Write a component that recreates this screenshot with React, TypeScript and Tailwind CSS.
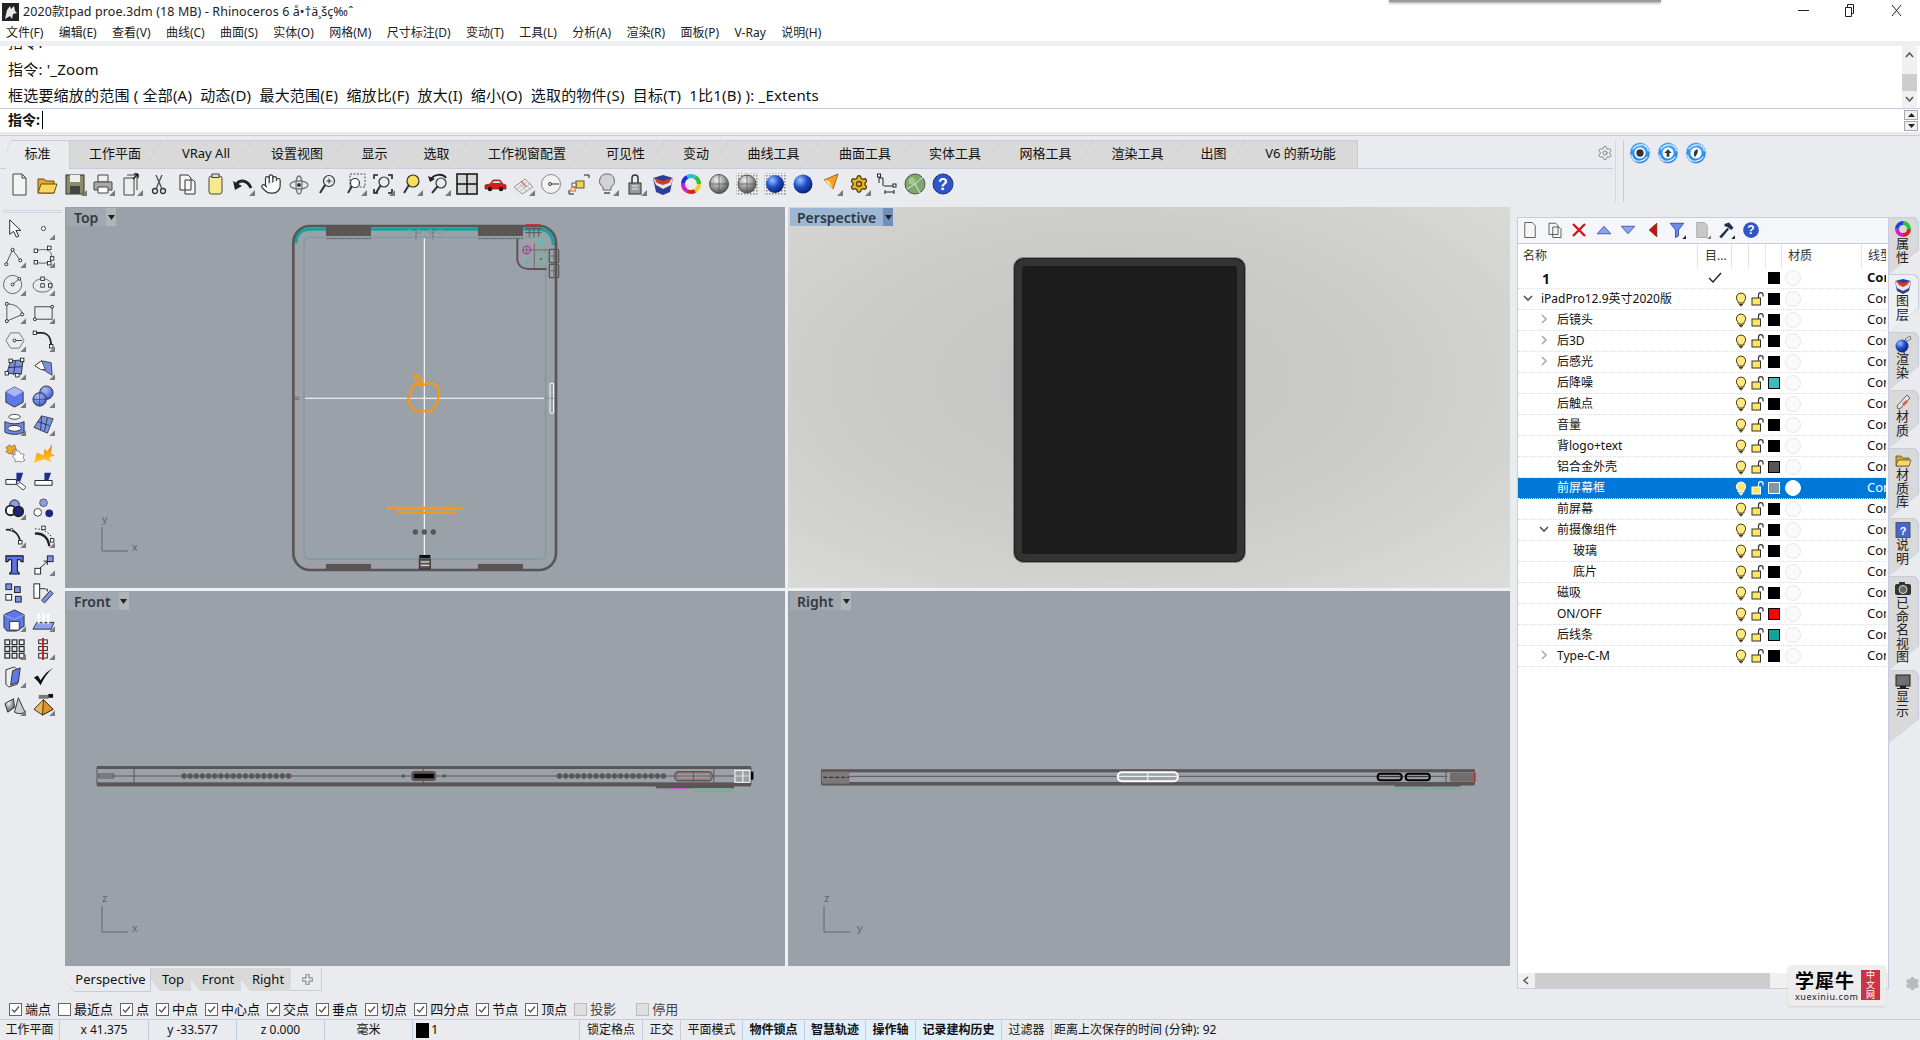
import React from 'react';
import { Hand, Settings } from 'lucide-react';

const DK = '#5c5556';
const TEAL = '#7f9a9b';

const menus = ['文件(F)', '编辑(E)', '查看(V)', '曲线(C)', '曲面(S)', '实体(O)', '网格(M)', '尺寸标注(D)', '变动(T)', '工具(L)', '分析(A)', '渲染(R)', '面板(P)', 'V-Ray', '说明(H)'];

const tabs = [
  { label: '工作平面', w: 'w-[110px]' },
  { label: 'VRay All', w: 'w-[108px]' },
  { label: '设置视图', w: 'w-[110px]' },
  { label: '显示', w: 'w-[81px]' },
  { label: '选取', w: 'w-[79px]' },
  { label: '工作视窗配置', w: 'w-[138px]' },
  { label: '可见性', w: 'w-[95px]' },
  { label: '变动', w: 'w-[82px]' },
  { label: '曲线工具', w: 'w-[109px]' },
  { label: '曲面工具', w: 'w-[110px]' },
  { label: '实体工具', w: 'w-[106px]' },
  { label: '网格工具', w: 'w-[111px]' },
  { label: '渲染工具', w: 'w-[109px]' },
  { label: '出图', w: 'w-[79px]' },
  { label: 'V6 的新功能', w: 'w-[131px]' },
];

const layers = [
  { name: 'iPadPro12.9英寸2020版', level: 0, chev: 'down', color: '#000' },
  { name: '后镜头', level: 1, chev: 'right', color: '#000' },
  { name: '后3D', level: 1, chev: 'right', color: '#000' },
  { name: '后感光', level: 1, chev: 'right', color: '#000' },
  { name: '后降噪', level: 1, color: '#3cbcbc' },
  { name: '后触点', level: 1, color: '#000' },
  { name: '音量', level: 1, color: '#000' },
  { name: '背logo+text', level: 1, color: '#000' },
  { name: '铝合金外壳', level: 1, color: '#5c5556' },
  { name: '前屏幕框', level: 1, color: '#7f9a9b', selected: true },
  { name: '前屏幕', level: 1, color: '#000' },
  { name: '前摄像组件', level: 1, chev: 'down', color: '#000' },
  { name: '玻璃', level: 2, color: '#000' },
  { name: '底片', level: 2, color: '#000' },
  { name: '磁吸', level: 1, color: '#000' },
  { name: 'ON/OFF', level: 1, color: '#ff0000' },
  { name: '后线条', level: 1, color: '#12a39f' },
  { name: 'Type-C-M', level: 1, chev: 'right', color: '#000' },
];

const snaps = [
  { t: '端点', on: true },
  { t: '最近点', on: false },
  { t: '点', on: true },
  { t: '中点', on: true },
  { t: '中心点', on: true },
  { t: '交点', on: true },
  { t: '垂点', on: true },
  { t: '切点', on: true },
  { t: '四分点', on: true },
  { t: '节点', on: true },
  { t: '顶点', on: true },
];

const status = [
  { t: '工作平面', w: 'w-[60px]' },
  { t: 'x 41.375', w: 'w-[89px]' },
  { t: 'y -33.577', w: 'w-[88px]' },
  { t: 'z 0.000', w: 'w-[88px]' },
  { t: '毫米', w: 'w-[88px]' },
];

const status2 = [
  { t: '锁定格点', w: 'w-[63px]' },
  { t: '正交', w: 'w-[38px]' },
  { t: '平面模式', w: 'w-[62px]' },
  { t: '物件锁点', w: 'w-[62px]', on: true },
  { t: '智慧轨迹', w: 'w-[61px]', on: true },
  { t: '操作轴', w: 'w-[50px]', on: true },
  { t: '记录建构历史', w: 'w-[86px]', on: true },
  { t: '过滤器', w: 'w-[50px]' },
];

const Fly = () => <path d="M24 24h-6l6-6z" fill="#7b7b7b" />;
const ln = { fill: 'none', stroke: '#333', strokeWidth: 1.3 };
const Mag = ({ x = 14, y = 9, r = 5.5, f = 'none' }: { x?: number; y?: number; r?: number; f?: string }) => (
  <>
    <circle cx={x} cy={y} r={r} fill={f} stroke="#333" strokeWidth={1.2} />
    <path d={`M${x - r * 0.7} ${y + r * 0.7}L5 21`} stroke="#333" strokeWidth={2} />
  </>
);

const topIcons: React.ReactNode[] = [
  <path d="M6 2h9l4 4v17H6zM15 2v4h4" fill="#f4f4f4" stroke="#444" />,
  <><path d="M3 21V7h6l2 2h8v12z" fill="#e3a92a" stroke="#6b4d0c" /><path d="M3 21l3-9h16l-3 9z" fill="#f9d65c" stroke="#6b4d0c" /></>,
  <><rect x="3" y="3" width="18" height="19" fill="#8d8d6d" stroke="#333" /><rect x="7" y="3" width="10" height="7" fill="#eee" /><rect x="7" y="14" width="10" height="8" fill="#444" /><Fly /></>,
  <><path d="M7 3h10v7H7z" fill="#eee" stroke="#444" /><path d="M3 10h18v8H3z" fill="#a9a9a9" stroke="#444" /><path d="M7 15h10v6H7z" fill="#fff" stroke="#444" /><Fly /></>,
  <><path d="M5 6h10v17H5z" fill="#eee" stroke="#444" /><path d="M8 3h10v15" fill="none" stroke="#444" /><path d="M14 7l5-5M19 2v4M19 2h-4" stroke="#222" strokeWidth={1.5} /><Fly /></>,
  <><circle cx="8" cy="19" r="2.5" fill="none" stroke="#333" strokeWidth={1.3} /><circle cx="16" cy="19" r="2.5" fill="none" stroke="#333" strokeWidth={1.3} /><path d="M9 17L15 3M15 17L9 3" stroke="#555" strokeWidth={1.4} /></>,
  <path d="M5 3h8l3 3v12H5zM10 8h8l2 2v12H10z" fill="#f7f7f7" stroke="#333" />,
  <><rect x="6" y="4" width="13" height="18" rx="2.5" fill="#f8e98a" stroke="#444" /><rect x="9" y="2" width="7" height="3.5" fill="#ddd" stroke="#444" /></>,
  <><path d="M5 14c2-7 11-7 15 2" fill="none" stroke="#222" strokeWidth={3} /><path d="M2 9l2 9 7-4z" fill="#222" /><Fly /></>,
  <Hand x={1} y={1} width={22} height={22} fill="#fff" stroke="#333" strokeWidth={1.3} />,
  <><ellipse cx="12" cy="13" rx="9" ry="4" {...ln} stroke="#777" /><ellipse cx="12" cy="13" rx="3" ry="9" {...ln} stroke="#777" /><circle cx="12" cy="13" r="2" fill="#333" /></>,
  <><Mag /><path d="M11.5 9h5M14 6.5v5" stroke="#333" /></>,
  <><rect x="7" y="2" width="15" height="13" fill="none" stroke="#444" strokeDasharray="2 1.5" /><Mag x={12} y={11} r={4.5} f="#fff" /><Fly /></>,
  <><path d="M3 7V3h4M17 3h4v4M3 17v4h4M21 17v4h-4" fill="none" stroke="#222" strokeWidth={1.6} /><Mag x={13} y={10} r={5} /><Fly /></>,
  <><Mag x={14} y={9} r={6} f="#f4e05a" /><Fly /></>,
  <><Mag x={14} y={11} r={5} /><path d="M4 8c2-6 12-7 15-2" fill="none" stroke="#222" strokeWidth={2} /><path d="M1 4l2 6 5-3z" fill="#222" /><Fly /></>,
  <><rect x="2" y="2" width="20" height="20" fill="#d7d7d7" stroke="#111" strokeWidth={1.5} /><path d="M12 2v20M2 12h20" stroke="#111" strokeWidth={1.5} /></>,
  <><path d="M2 17v-4l5-1 3-4h7l3 4 3 1v4z" fill="#d81f1f" stroke="#8c1010" strokeWidth={0.7} /><path d="M9 11l2-2h5l2 2z" fill="#bde" /><circle cx="7" cy="17" r="2.2" fill="#111" /><circle cx="18" cy="17" r="2.2" fill="#111" /></>,
  <><path d="M3 15l11-8 8 8-11 7z" fill="#e9e9e9" stroke="#999" /><path d="M8 11l8 8M11 9l8 8M6 17l11-8M9 19l11-8" stroke="#aaa" strokeWidth={0.7} /><path d="M10 9l5 6" stroke="#d33" /><Fly /></>,
  <><circle cx="12" cy="12" r="9.5" fill="#f2f2f2" stroke="#888" /><circle cx="11" cy="12" r="1.5" fill="#fff" stroke="#333" /><path d="M12.5 12H20" stroke="#333" /></>,
  <><rect x="9" y="9" width="8" height="7" fill="#f6d33c" stroke="#555" /><path d="M5 11h4v4H5z" fill="#fff" stroke="#555" /><path d="M17 3h5v3M2 22h5M2 18v4" fill="none" stroke="#222" /><path d="M3 19l3-5 3 5z" fill="none" stroke="#d07020" /></>,
  <><path d="M12 2a7 7 0 0 0-4 13v3h8v-3a7 7 0 0 0-4-13z" fill="#d3d3d3" stroke="#666" /><path d="M9 20h6v2H9z" fill="#777" /><Fly /></>,
  <><rect x="6" y="11" width="12" height="11" fill="#999" stroke="#333" /><path d="M9 11V6a3 3 0 0 1 6 0v5" fill="none" stroke="#333" strokeWidth={1.5} /><path d="M9 14h6M9 17h6" stroke="#eee" /><Fly /></>,
  <><path d="M2 6l10-3 10 3-3 14-7 3-7-3z" fill="#2d3e9a" /><path d="M2 6l10 5 10-5-2 7-8 4-7-4z" fill="#e8e8e8" /><path d="M3 6l9 3 9-3-3 5-6 2-6-2z" fill="#d93a1c" /></>,
  <><circle cx="12" cy="12" r="8" fill="none" stroke="#e8d020" strokeWidth={4} strokeDasharray="8.4 42" strokeDashoffset="0" /><circle cx="12" cy="12" r="8" fill="none" stroke="#e02020" strokeWidth={4} strokeDasharray="8.4 42" strokeDashoffset="-8.4" /><circle cx="12" cy="12" r="8" fill="none" stroke="#d020c0" strokeWidth={4} strokeDasharray="8.4 42" strokeDashoffset="-16.8" /><circle cx="12" cy="12" r="8" fill="none" stroke="#2030d0" strokeWidth={4} strokeDasharray="8.4 42" strokeDashoffset="-25.2" /><circle cx="12" cy="12" r="8" fill="none" stroke="#20c0d0" strokeWidth={4} strokeDasharray="8.4 42" strokeDashoffset="-33.6" /><circle cx="12" cy="12" r="8" fill="none" stroke="#30c030" strokeWidth={4} strokeDasharray="8.4 42" strokeDashoffset="-42" /></>,
  <><circle cx="12" cy="12" r="9.5" fill="url(#rkGray)" stroke="#555" /><path d="M12 2.5v19M2.5 12h19" stroke="#555" strokeWidth={0.7} /></>,
  <><rect x="1" y="1" width="22" height="22" fill="url(#rkDots)" /><circle cx="12" cy="12" r="9" fill="url(#rkGray)" stroke="#555" /><path d="M12 3v18M3 12h18" stroke="#555" strokeWidth={0.7} /></>,
  <><rect x="1" y="1" width="22" height="22" fill="url(#rkDots)" /><circle cx="12" cy="12" r="9" fill="url(#rkBlue)" /></>,
  <circle cx="12" cy="12" r="9.5" fill="url(#rkBlue)" />,
  <><path d="M5 8l14-6-5 15z" fill="#f2a22a" stroke="#a66812" /><path d="M5 8l5 1 4 8z" fill="#ffe9a8" /><Fly /></>,
  <><Settings x={2} y={2} width={20} height={20} fill="#e6b52e" stroke="#5a4510" strokeWidth={1.7} /><Fly /></>,
  <><path d="M4 3v8M4 6h4v8M9 14h11" fill="none" stroke="#222" /><rect x="2.5" y="2" width="3" height="3" fill="#fff" stroke="#222" /><rect x="18" y="12" width="3" height="3" fill="#fff" stroke="#222" /><path d="M10 20h9M10 18v4M19 18v4" stroke="#222" /></>,
  <><circle cx="12" cy="12" r="10" fill="#7ea86c" stroke="#555" /><path d="M12 12L20 5M12 12L4 17M12 12l5 9" stroke="#eef" strokeWidth={0.9} /><circle cx="9" cy="9" r="3.5" fill="#a5c78c" /></>,
  <><circle cx="12" cy="12" r="10" fill="#2f55c8" stroke="#1b2f80" /><text x="12" y="17.5" fontSize="16" fontWeight="700" textAnchor="middle" fill="#fff" fontFamily="Liberation Sans">?</text></>,
];

const Node = ({ x, y, f = '#fff' }: { x: number; y: number; f?: string }) => <rect x={x - 1.8} y={y - 1.8} width="3.6" height="3.6" fill={f} stroke="#222" strokeWidth={0.9} />;

const leftIcons: React.ReactNode[] = [
  <path d="M7 3v15l4-3 3 6 2.5-1-3-6h5z" fill="#fff" stroke="#222" />,
  <><circle cx="12" cy="12" r="2.2" fill="#fff" stroke="#444" /><Fly /></>,
  <><path d="M3 20L10 5l8 11" fill="none" stroke="#555" /><circle cx="3.5" cy="20" r="1.6" fill="#fff" stroke="#222" /><circle cx="10" cy="5" r="1.6" fill="#fff" stroke="#222" /><circle cx="18" cy="16" r="1.6" fill="#fff" stroke="#222" /><Fly /></>,
  <><path d="M4 6c14-4 18 2 16 9-1 4-8 5-16 3" fill="none" stroke="#555" /><Node x={4} y={6} /><Node x={18} y={3} /><Node x={21} y={14} /><Node x={18} y={19} /><Node x={4} y={18} /><Fly /></>,
  <><circle cx="10" cy="12" r="9.5" fill="none" stroke="#666" /><path d="M10 12l7-6" stroke="#555" /><circle cx="10" cy="12" r="1.5" fill="#fff" stroke="#222" /><circle cx="17" cy="6" r="1.5" fill="#fff" stroke="#222" /><Fly /></>,
  <><ellipse cx="11" cy="13" rx="10" ry="7" fill="none" stroke="#666" /><Node x={11} y={6} /><Node x={11} y={13} /><Node x={19} y={13} /><Fly /></>,
  <><path d="M4 3v18M4 3c8 0 15 4 16 11L4 21" fill="none" stroke="#555" /><circle cx="4" cy="3" r="1.6" fill="#fff" stroke="#222" /><circle cx="20" cy="14" r="1.6" fill="#fff" stroke="#222" /><circle cx="4" cy="21" r="1.6" fill="#fff" stroke="#222" /><Fly /></>,
  <><rect x="3" y="6" width="18" height="13" fill="none" stroke="#444" /><circle cx="3" cy="19" r="1.5" fill="#fff" stroke="#222" /><circle cx="21" cy="6" r="1.5" fill="#fff" stroke="#222" /><Fly /></>,
  <><path d="M3 12l5-8h9l5 8-5 8H8z" fill="none" stroke="#777" /><path d="M12 12h8" stroke="#444" /><circle cx="12" cy="12" r="1.5" fill="#fff" stroke="#222" /><Fly /></>,
  <><path d="M4 4h6c6 0 10 5 10 14" fill="none" stroke="#222" strokeWidth={2} /><Node x={3} y={4} /><Node x={20} y={18} /><Fly /></>,
  <><path d="M4 17l4-13 13-1-2 15z" fill="#7790e8" stroke="#333" /><path d="M6 11l14-1M13 4l-2 15" stroke="#333" /><Node x={8} y={4} /><Node x={20} y={3} /><Node x={4} y={17} /><Node x={15} y={19} /><Fly /></>,
  <><path d="M3 9l7-5 10 2 1 13-8-5-3-1z" fill="#7a92e6" stroke="#444" /><path d="M3 9l7-5 4 9-5 0z" fill="#fff" stroke="#444" /><Fly /></>,
  <><path d="M12 2l9 5v11l-9 5-9-5V7z" fill="#5f78e8" stroke="#333" /><path d="M3 7l9 5 9-5-9-5z" fill="#a9b8f2" /><Fly /></>,
  <><circle cx="15" cy="8" r="7" fill="url(#rkBlueS)" stroke="#333" /><circle cx="8" cy="15" r="7" fill="url(#rkBlueS)" stroke="#333" /><path d="M8 8v14M1 15h14" stroke="#334" strokeWidth={0.6} /><Fly /></>,
  <><ellipse cx="12" cy="4" rx="6" ry="2.5" fill="#fff" stroke="#444" /><path d="M2 9c6 3 14 3 20 0v11c-6 3-14 3-20 0z" fill="#6d86ea" stroke="#333" /><ellipse cx="12" cy="16" rx="7" ry="3" fill="#fff" stroke="#333" /><Fly /></>,
  <><path d="M2 15L10 3l12 3-6 15z" fill="#7b92e6" stroke="#444" /><path d="M6 9l12 4M10 3l-1 15M16 5l-3 14" stroke="#223" strokeWidth={0.8} /><Fly /></>,
  <><path d="M3 7l4-3 2 2 3-2 2 5-4 1 1 4-5-1-3-2 2-2z" fill="#f2a81c" stroke="#444" strokeWidth={0.6} /><path d="M12 11l4-1 2 3 4 1-1 4 2 2-4 2-3-1-3 1-1-4-2-2 3-2z" fill="#fff" stroke="#444" strokeWidth={0.6} /></>,
  <path d="M2 23l3-11 7 3 1-7 3 3 5-8-1 10 4 2-6 2 2 5-8-3z" fill="url(#rkOrange)" />,
  <><path d="M3 11h11v5H3z" fill="#fff" stroke="#222" /><path d="M14 4h7l-3 9h-4z" fill="#1f2f90" /><path d="M14 16l7 6 3-3-6-5z" fill="#fff" stroke="#444" /></>,
  <><path d="M3 12h18v5H3z" fill="#fff" stroke="#222" /><path d="M13 4h7l-3 8h-4z" fill="#1f2f90" /></>,
  <><circle cx="12" cy="8" r="5" fill="#8a9cec" stroke="#222" /><circle cx="8" cy="14" r="5" fill="#fff" stroke="#222" strokeWidth={2} /><circle cx="16" cy="15" r="5" fill="#1f2480" stroke="#222" strokeWidth={2} /><Fly /></>,
  <><circle cx="12" cy="6" r="4" fill="#8a9cec" stroke="#555" /><circle cx="6" cy="16" r="4" fill="#fff" stroke="#444" /><circle cx="18" cy="17" r="4" fill="#1f2480" /></>,
  <><path d="M3 5c9-1 14 5 15 13" fill="none" stroke="#222" strokeWidth={1.8} /><circle cx="9" cy="5" r="1.4" fill="#fff" stroke="#222" /><Node x={18} y={18} /><Fly /></>,
  <><path d="M3 9c9-1 14 5 15 13" fill="none" stroke="#222" strokeWidth={2.4} /><path d="M3 4c11 0 18 6 19 14" fill="none" stroke="#222" strokeDasharray="1.5 2" /><Node x={12} y={3} /><Node x={21} y={16} /><Fly /></>,
  <><path d="M3 3h18v6h-2l-1-2h-3v12l2 2v1H7v-1l2-2V7H6L5 9H3z" fill="#5a75e8" stroke="#111" strokeWidth={1.1} /></>,
  <><rect x="3" y="16" width="6" height="6" fill="#fff" stroke="#222" /><rect x="16" y="3" width="6" height="6" fill="#7b92e6" stroke="#222" /><path d="M8 16l8-7M12 8.5h4v4" fill="none" stroke="#222" /><Fly /></>,
  <><rect x="3" y="3" width="6" height="6" fill="#7b92e6" stroke="#222" /><rect x="12" y="6" width="6" height="6" fill="#7b92e6" stroke="#222" /><rect x="3" y="14" width="6" height="6" fill="#fff" stroke="#222" /><rect x="13" y="16" width="6" height="6" fill="#7b92e6" stroke="#222" /></>,
  <><rect x="2" y="3" width="6" height="15" fill="#fff" stroke="#222" /><path d="M8 8h6l2 2M16 8v3" fill="none" stroke="#333" /><path d="M10 20l9-10 3 3-9 10z" fill="#7b92e6" stroke="#333" /></>,
  <><path d="M12 1l10 5v12l-8 5H4l-3-4V6z" fill="#5f78e8" stroke="#333" /><path d="M7 13h10v9H7z" fill="#fff" stroke="#333" /><path d="M1 6l11 5 10-5" fill="none" stroke="#9fb0f0" /><Fly /></>,
  <><path d="M1 21l4-7h18l-3 7z" fill="#8ea2ee" stroke="#333" /><path d="M7 15V5M12 15V5M17 15V5" stroke="#fff" strokeWidth={2} /><path d="M5 8l2-4 2 4M10 8l2-4 2 4M15 8l2-4 2 4" fill="#fff" /><Fly /></>,
  <><g fill="none" stroke="#222" strokeWidth={1.2}><rect x="2" y="3" width="5" height="5" /><rect x="9.5" y="3" width="5" height="5" /><rect x="17" y="3" width="5" height="5" /><rect x="2" y="10" width="5" height="5" /><rect x="9.5" y="10" width="5" height="5" /><rect x="17" y="10" width="5" height="5" /><rect x="2" y="17" width="5" height="5" /><rect x="9.5" y="17" width="5" height="5" /><rect x="17" y="17" width="5" height="5" /></g><Fly /></>,
  <><g fill="none" stroke="#222"><rect x="7" y="3" width="9" height="4" /><rect x="7" y="10" width="9" height="4" /><rect x="7" y="17" width="9" height="5" /></g><path d="M11.5 1v23" stroke="#c81e1e" strokeWidth={2} /><Fly /></>,
  <><path d="M3 5l9-3 3 3v15l-9 3-3-3z" fill="#ededed" stroke="#333" /><path d="M10 6l8-3-2 15-8 3z" fill="#5f78e8" stroke="#333" /><Fly /></>,
  <path d="M2 13l4 4 3 4C12 14 16 8 22 3c-7 4-10 8-13 13l-3-5z" fill="#111" />,
  <><path d="M2 11l9-5 1 9-7 5z" fill="url(#rkGray)" stroke="#333" /><path d="M16 5l7 15c-3 2-8 2-11 0z" fill="#ccc" stroke="#333" /><Fly /></>,
  <><path d="M12 7L2 17l9 6 11-6z" fill="#f0b44a" stroke="#333" /><path d="M12 7l-1 16 11-6z" fill="#e09628" stroke="#333" /><path d="M7 2h10v4H7z" fill="#777" /><path d="M17 1h5v4h-5z" fill="#111" /><Fly /></>,
];

const panelIcons: React.ReactNode[] = [
  <path d="M5 2h10l4 4v16H5z" fill="#f6f6f6" stroke="#333" />,
  <path d="M4 3h9l3 3v12H4zM9 8h8l3 3v11H9z" fill="#f6f6f6" stroke="#333" />,
  <path d="M4 4l16 16M20 4L4 20" stroke="#d01616" strokeWidth={3.2} />,
  <path d="M3 17L12 7l9 10z" fill="#8ea2ee" stroke="#2438a0" />,
  <path d="M3 7l9 10 9-10z" fill="#8ea2ee" stroke="#2438a0" />,
  <path d="M17 3v18L7 12z" fill="#c31414" stroke="#7a0a0a" />,
  <><path d="M3 3h18l-7 9v8l-4 2V12z" fill="#6d8be8" stroke="#1f3590" /><path d="M24 24h-5l5-5z" fill="#222" /></>,
  <><path d="M5 2h10l4 4v16H5z" fill="#c9c9c9" stroke="#999" /><path d="M24 24h-5l5-5z" fill="#777" /></>,
  <><path d="M3 21L14 9l2 2L6 23z" fill="#24304a" /><path d="M10 4l6-2 6 7-3 3-5-4-4-1z" fill="#24304a" /><path d="M24 24h-5l5-5z" fill="#222" /></>,
  <><circle cx="12" cy="12" r="10.5" fill="#2f55c8" /><text x="12" y="17.5" fontSize="16" fontWeight="700" textAnchor="middle" fill="#fff" fontFamily="Liberation Sans">?</text></>,
];

const sideTabs = [
  { h: 'h-[57px]', label: '属性', icon: <><circle cx="9" cy="9" r="6" fill="none" stroke="#e02020" strokeWidth={4} strokeDasharray="9.4 28" /><circle cx="9" cy="9" r="6" fill="none" stroke="#d020c0" strokeWidth={4} strokeDasharray="9.4 28" strokeDashoffset="-9.4" /><circle cx="9" cy="9" r="6" fill="none" stroke="#2040e0" strokeWidth={4} strokeDasharray="9.4 28" strokeDashoffset="-18.8" /><circle cx="9" cy="9" r="6" fill="none" stroke="#30c040" strokeWidth={4} strokeDasharray="9.4 28" strokeDashoffset="-28.2" /></> },
  { h: 'h-[58px]', label: '图层', active: true, icon: <><path d="M1 4l8-2 8 2-2 10-6 3-6-3z" fill="#2d3e9a" /><path d="M1 4l8 3 8-3-2 7-6 3-6-3z" fill="#e8e8e8" /><path d="M2 4l7 2 7-2-3 4-4 2-4-2z" fill="#d93a1c" /></> },
  { h: 'h-[58px]', label: '渲染', icon: <><circle cx="8" cy="11" r="6.5" fill="url(#rkBlue)" /><path d="M11 4l5-3 1 3-4 2z" fill="#ddd" stroke="#444" strokeWidth={0.6} /></> },
  { h: 'h-[58px]', label: '材质', icon: <><path d="M4 16l-1-3L13 2l3 3L7 15z" fill="#e3e3e3" stroke="#444" strokeWidth={0.8} /><path d="M8 11l4-4 2 2-4 4z" fill="#d9663c" /></> },
  { h: 'h-[70px]', label: '材质库', icon: <><path d="M2 15V5h5l2 2h6v8z" fill="#d9a52a" stroke="#444" strokeWidth={0.7} /><path d="M2 15l2-6h13l-2 6z" fill="#f8d86a" stroke="#444" strokeWidth={0.7} /></> },
  { h: 'h-[58px]', label: '说明', icon: <><rect x="2" y="1.5" width="14" height="15" fill="#4767d0" stroke="#555" /><text x="9" y="14" fontSize="11" fontWeight="700" textAnchor="middle" fill="#fff" fontFamily="Liberation Sans">?</text></> },
  { h: 'h-[94px]', label: '已命名视图', icon: <><rect x="1" y="5" width="16" height="11" rx="2" fill="#333" /><rect x="5" y="3" width="6" height="3" fill="#333" /><circle cx="9" cy="10.5" r="4" fill="#666" stroke="#ddd" /></> },
  { h: 'h-[73px]', label: '显示', icon: <><rect x="2" y="2" width="14" height="11" fill="#6f6f6f" stroke="#222" /><path d="M6 13h6v2h3v1H3v-1h3z" fill="#222" /></> },
];

const Bulb = ({ white }: { white?: boolean }) => (
  <svg width="12" height="15" viewBox="0 0 12 15">
    <path d="M6 1a4.7 4.7 0 0 0-3 8.3V11h6V9.3A4.7 4.7 0 0 0 6 1z" fill="#ffe97e" stroke={white ? '#fff' : '#4a3a10'} />
    <path d="M4 12.5h4" stroke={white ? '#fff' : '#4a3a10'} strokeWidth={1.5} />
    <path d="M5 13.8h2" stroke={white ? '#fff' : '#4a3a10'} />
  </svg>
);

const Lock = ({ white }: { white?: boolean }) => (
  <svg width="14" height="14" viewBox="0 0 14 14">
    <rect x="1" y="6" width="8.5" height="7" fill="#ffe560" stroke={white ? '#fff' : '#333'} />
    <path d="M7.5 6V3a2.3 2.3 0 0 1 4.6 0v1.5" fill="none" stroke={white ? '#fff' : '#333'} strokeWidth={1.2} />
  </svg>
);

const Chev = ({ dir }: { dir: string }) => (
  <svg width="10" height="10" viewBox="0 0 10 10" className="absolute top-[4px]">
    <path d={dir === 'down' ? 'M1 3l4 4 4-4' : 'M3 1l4 4-4 4'} fill="none" stroke={dir === 'down' ? '#555' : '#aaa'} strokeWidth={1.6} />
  </svg>
);

const TopDrawing = () => (
  <svg className="absolute inset-0" width="720" height="381" viewBox="0 0 720 381" fill="none">
    <g transform="translate(205 3) scale(0.3333)">
      <path d="M78 100Q78 60 120 58H168M303 58H624M760 58H810Q848 62 850 105" stroke="#12a39f" strokeWidth="9" />
      <rect x="70" y="48" width="788" height="1032" rx="50" stroke={DK} strokeWidth="8" />
      <rect x="168" y="45" width="135" height="33" fill={DK} />
      <rect x="624" y="45" width="135" height="33" fill={DK} />
      <path d="M170 86H303M626 86H760" stroke={DK} strokeWidth="3" strokeDasharray="5 3" />
      <rect x="168" y="1062" width="135" height="18" fill={DK} />
      <rect x="624" y="1062" width="135" height="18" fill={DK} />
      <rect x="102" y="82" width="725" height="965" rx="15" stroke={TEAL} strokeWidth="4" />
      <path d="M742 85V150Q745 175 775 177H830" stroke={DK} strokeWidth="6" />
      <circle cx="815" cy="97" r="22" fill="#8fa9a2" />
      <circle cx="813" cy="147" r="21" fill="#8fa9a2" stroke="#7fa99b" strokeWidth="3" />
      <circle cx="813" cy="147" r="3" fill={DK} />
      <circle cx="770" cy="120" r="12" stroke="#c020c0" strokeWidth="3" />
      <path d="M758 120H840M770 108V132M793 100V180" stroke={DK} strokeWidth="2" />
      <path d="M805 94H822M813 85V103" stroke="#00e5e5" strokeWidth="3" />
      <circle cx="771" cy="155" r="5" fill="#3cbcbc" />
      <path d="M768 44H812" stroke="#d03030" strokeWidth="4" />
      <path d="M765 55H815M765 68H815M778 55V80M792 55V80M806 55V80" stroke={DK} strokeWidth="3" />
      <rect x="838" y="118" width="28" height="40" rx="3" stroke={DK} strokeWidth="4" />
      <rect x="838" y="163" width="28" height="40" rx="3" stroke={DK} strokeWidth="4" />
      <path d="M842 138H862M842 182H862M852 118V200" stroke={DK} strokeWidth="2" />
      <rect x="840" y="520" width="11" height="90" rx="2" stroke="#fff" strokeWidth="3" />
      <path d="M72 562H88M72 568H88" stroke={DK} strokeWidth="2" />
      <path d="M825 565H852" stroke={TEAL} strokeWidth="3" />
      <path d="M463 85V1040M105 565H822" stroke="#fff" strokeWidth="3.2" />
      <path d="M434 496C445 494 458 508 460 524C446 522 434 512 434 496ZM458 526C475 515 495 518 505 535C510 560 502 590 482 605C470 608 460 598 445 605C428 605 416 585 414 565C425 562 420 530 432 524C442 520 450 524 458 526Z" stroke="#ff9900" strokeWidth="6" />
      <path d="M352 895H580" stroke="#ff9900" strokeWidth="10" strokeDasharray="14 1 6 1" />
      <path d="M382 908H556" stroke="#ff9900" strokeWidth="8" strokeDasharray="10 1 5 1" />
      <circle cx="436" cy="966" r="8" fill={DK} />
      <circle cx="463" cy="966" r="8" fill={DK} />
      <circle cx="490" cy="966" r="8" fill={DK} />
      <circle cx="417" cy="66" r="7" stroke={TEAL} strokeWidth="3" />
      <circle cx="512" cy="66" r="7" stroke={TEAL} strokeWidth="3" />
      <circle cx="445" cy="66" r="8" fill={TEAL} />
      <circle cx="483" cy="66" r="8" fill={TEAL} />
      <path d="M438 58V88M489 58V88" stroke={DK} strokeWidth="3" strokeDasharray="5 4" />
      <rect x="448" y="1035" width="33" height="9" fill="#111" />
      <rect x="448" y="1047" width="33" height="30" fill={DK} stroke="#333" strokeWidth="3" />
      <path d="M452 1056H478M452 1066H478" stroke="#fff" strokeWidth="3" />
    </g>
    <path d="M37 344V320M37 344H63" stroke="#62686e" />
    <text x="37" y="316" fontSize="11" fill="#62686e" fontFamily="Liberation Sans">y</text>
    <text x="67" y="344" fontSize="11" fill="#62686e" fontFamily="Liberation Sans">x</text>
  </svg>
);

const FX = (z: number) => 15 + z * 0.4464;
const RX = (z: number) => 12 + z * 0.4464;
const FY = (z: number) => 159 + z / 3;

const FrontDrawing = () => {
  const dots: number[] = [];
  for (let i = 0; i < 18; i++) dots.push(233 + (i * 234) / 17, 1074 + (i * 233) / 17);
  return (
    <svg className="absolute inset-0" width="720" height="375" viewBox="0 0 720 375" fill="none">
      <rect x={FX(1290)} y={FY(106)} width={78} height={3} fill={DK} />
      <rect x={FX(1318)} y={FY(114)} width={19} height={1.2} fill="#c060c0" />
      <rect x={FX(1372)} y={FY(114)} width={39} height={4} fill="#7fa99b" />
      <rect x={FX(38)} y={FY(50)} width={654} height={19} rx="1.5" stroke={DK} />
      <rect x={FX(38)} y={FY(48)} width={654} height={3} fill={DK} />
      <rect x={FX(38)} y={FY(97)} width={654} height={4} fill={DK} />
      <path d={`M${FX(40)} ${FY(78)}H${FX(1500)}`} stroke={DK} />
      <path d={`M${FX(121)} ${FY(50)}V${FY(98)}M${FX(1420)} ${FY(50)}V${FY(98)}M${FX(769)} ${FY(55)}V${FY(100)}`} stroke={DK} />
      <rect x={FX(42)} y={FY(72)} width={15} height={4} fill="none" stroke={DK} />
      {dots.map((d) => <circle key={d} cx={FX(d)} cy={FY(78)} r="2.7" fill={DK} />)}
      <rect x={FX(742)} y={FY(63)} width={25} height={10} rx="3.5" fill={DK} />
      <rect x={FX(748)} y={FY(71)} width={20} height={4.5} rx="1" fill="#000" />
      <circle cx={FX(724)} cy={FY(78)} r="1.8" fill={DK} />
      <circle cx={FX(816)} cy={FY(78)} r="1.8" fill={DK} />
      <rect x={FX(1333)} y={FY(65)} width={37} height={9} rx="3.5" stroke={DK} strokeWidth="1.5" fill="#9aa1a9" />
      <rect x={FX(1337)} y={FY(69)} width={33} height={6} rx="2" stroke="#a85a5a" />
      <path d={`M${FX(1374)} ${FY(66)}V${FY(92)}M${FX(1337)} ${FY(78)}H${FX(1412)}`} stroke={DK} />
      <rect x={FX(1467)} y={FY(61)} width={15} height={12} stroke="#fff" />
      <path d={`M${FX(1467)} ${FY(78)}H${FX(1500)}M${FX(1485)} ${FY(61)}V${FY(97)}`} stroke="#fff" />
      <rect x={FX(1503)} y={FY(65)} width={2.5} height={8} fill="#000" />
      <path d="M37 341V315M37 341H63" stroke="#62686e" />
      <text x="37" y="311" fontSize="11" fill="#62686e" fontFamily="Liberation Sans">z</text>
      <text x="67" y="341" fontSize="11" fill="#62686e" fontFamily="Liberation Sans">x</text>
    </svg>
  );
};

const RightDrawing = () => (
  <svg className="absolute inset-0" width="722" height="375" viewBox="0 0 722 375" fill="none">
    <rect x={RX(1332)} y={FY(104)} width={66} height={2} fill={DK} />
    <rect x={RX(1335)} y={FY(110)} width={30} height={3.5} fill="#7fa99b" />
    <rect x={RX(1412)} y={FY(110)} width={30} height={3.5} fill="#7fa99b" />
    <rect x={RX(48)} y={FY(58)} width={653} height={3} fill={DK} />
    <rect x={RX(48)} y={FY(96)} width={653} height={3.5} fill={DK} />
    <rect x={RX(48)} y={FY(60)} width={653} height={14} stroke={DK} />
    <rect x={RX(50)} y={FY(65)} width={27} height={12} fill="#7d797b" />
    <path d={`M${RX(52)} ${FY(82)}H${RX(110)}`} stroke="#222" strokeDasharray="4 2" />
    <path d={`M${RX(110)} ${FY(79)}H${RX(1450)}`} stroke={DK} />
    <rect x={RX(712)} y={FY(67)} width={60} height={9} rx="4" fill="#9aa1a9" stroke="#fff" strokeWidth="2" />
    <path d={`M${RX(714)} ${FY(79)}H${RX(845)}M${RX(779)} ${FY(67)}V${FY(95)}`} stroke="#fff" />
    <rect x={RX(1294)} y={FY(71)} width={24} height={6.5} rx="3" stroke="#000" strokeWidth="2" />
    <rect x={RX(1357)} y={FY(71)} width={24} height={6.5} rx="3" stroke="#000" strokeWidth="2" />
    <path d={`M${RX(1296)} ${FY(80)}H${RX(1345)}M${RX(1358)} ${FY(80)}H${RX(1408)}`} stroke="#333" />
    <path d={`M${RX(1447)} ${FY(62)}V${FY(96)}`} stroke={DK} />
    <rect x={RX(1456)} y={FY(68)} width={25} height={9} rx="1.5" fill="#736b6c" />
    <path d={`M${RX(1512)} ${FY(68)}V${FY(95)}`} stroke="#e02020" strokeWidth="1.5" />
    <path d="M36 341V315M36 341H62" stroke="#62686e" />
    <text x="36" y="311" fontSize="11" fill="#62686e" fontFamily="Liberation Sans">z</text>
    <text x="69" y="341" fontSize="11" fill="#62686e" fontFamily="Liberation Sans">y</text>
  </svg>
);

const ViewLabel = ({ name, active }: { name: string; active?: boolean }) => (
  <div className={`absolute left-[2px] top-[1px] flex h-[18px] items-center text-[14px] font-semibold text-[#33383f] ${active ? 'bg-[#9cb6d4]' : 'bg-[#a2a8b0]'}`}>
    <span className={active ? 'px-[7px]' : 'pl-[7px] pr-[8px]'}>{name}</span>
    <span className={`flex h-[18px] w-[10px] items-center justify-center ${active ? 'bg-[#6f90b8]' : 'bg-[#b0b5bc]'}`}>
      <svg width="7" height="5" viewBox="0 0 7 5"><path d="M0 0h7L3.5 5z" fill="#222" /></svg>
    </span>
  </div>
);

const CheckBox = ({ on, off }: { on?: boolean; off?: boolean }) => (
  <span className={`flex h-[13px] w-[13px] items-center justify-center border ${off ? 'border-[#bbb] bg-[#dfdfdf]' : 'border-[#666] bg-white'}`}>
    {on && <svg width="11" height="11" viewBox="0 0 11 11"><path d="M2 5.5l2.5 2.5L9 2.5" fill="none" stroke="#555" strokeWidth={1.3} /></svg>}
  </span>
);

export default function App() {
  return (
    <div className="relative flex h-[1040px] w-[1920px] flex-col overflow-hidden bg-[#e9ebef] font-['Noto_Sans','Noto_Sans_CJK_SC',sans-serif] text-[12px] text-[#111]">
      <svg className="absolute h-0 w-0">
        <defs>
          <radialGradient id="rkGray" cx="40%" cy="30%" r="70%"><stop offset="0%" stopColor="#f4f4f4" /><stop offset="100%" stopColor="#555" /></radialGradient>
          <radialGradient id="rkBlue" cx="35%" cy="30%" r="75%"><stop offset="0%" stopColor="#9fc2ff" /><stop offset="50%" stopColor="#1d4fc8" /><stop offset="100%" stopColor="#0a1f66" /></radialGradient>
          <radialGradient id="rkBlueS" cx="40%" cy="30%" r="70%"><stop offset="0%" stopColor="#b0bdf5" /><stop offset="100%" stopColor="#3f5cd8" /></radialGradient>
          <linearGradient id="rkOrange" x1="0" y1="0" x2="0" y2="1"><stop offset="0%" stopColor="#f27a10" /><stop offset="100%" stopColor="#ffd21f" /></linearGradient>
          <pattern id="rkDots" width="3" height="3" patternUnits="userSpaceOnUse"><rect width="3" height="3" fill="#eee" /><rect width="1.5" height="1.5" fill="#888" /></pattern>
          <radialGradient id="rkEye" cx="50%" cy="40%" r="60%"><stop offset="0%" stopColor="#6cc4ff" /><stop offset="100%" stopColor="#0a78e8" /></radialGradient>
        </defs>
      </svg>

      {/* Title bar */}
      <div className="relative flex h-[24px] items-center bg-white pl-[2px]">
        <svg width="17" height="18" viewBox="0 0 17 18" className="mr-[4px]">
          <rect width="17" height="18" fill="#222" />
          <path d="M3 16l2-9 3-4 1 3 3-3 1 5 2 2-4 1-1 5-2-3z" fill="#e8e8e8" />
        </svg>
        <span className="text-[12.5px] tracking-[0.1px] text-[#222]">2020款Ipad proe.3dm (18 MB) - Rhinoceros 6 å•†ä¸šç‰ˆ</span>
        <div className="absolute left-[1389px] top-0 h-[2px] w-[272px] bg-[#999] shadow-[0_1px_3px_#888]" />
        <div className="absolute right-0 top-0 flex h-[20px] items-center">
          <span className="flex w-[45px] justify-center"><svg width="11" height="11" viewBox="0 0 11 11"><path d="M0 5.5h11" stroke="#222" /></svg></span>
          <span className="flex w-[46px] justify-center"><svg width="11" height="13" viewBox="0 0 11 13"><path d="M1.5 3.5h6v9h-6zM3.5 3.5v-3h6v9h-2" fill="none" stroke="#222" /></svg></span>
          <span className="flex w-[48px] justify-center"><svg width="11" height="13" viewBox="0 0 11 13"><path d="M1 1l9 11M10 1L1 12" stroke="#222" /></svg></span>
        </div>
      </div>

      {/* Menu */}
      <div className="flex h-[17px] items-center gap-[15.4px] bg-white pl-[6px] text-[12px] leading-[17px] text-[#222]">
        {menus.map((m) => <span key={m}>{m}</span>)}
      </div>
      <div className="h-[5px] bg-[#eeeff1]" />

      {/* Command area */}
      <div className="relative h-[62px] overflow-hidden bg-white pl-[8px] text-[15px] leading-[20px] tracking-[0.2px]">
        <div className="absolute left-[8px] top-[-14px]">指令:</div>
        <div className="absolute left-[8px] top-[13px]">指令: '_Zoom</div>
        <div className="absolute left-[8px] top-[39px]">框选要缩放的范围 ( 全部(A)&nbsp;&nbsp;动态(D)&nbsp;&nbsp;最大范围(E)&nbsp;&nbsp;缩放比(F)&nbsp;&nbsp;放大(I)&nbsp;&nbsp;缩小(O)&nbsp;&nbsp;选取的物件(S)&nbsp;&nbsp;目标(T)&nbsp;&nbsp;1比1(B) ): _Extents</div>
        <div className="absolute right-[3px] top-0 flex h-[62px] w-[15px] flex-col items-center justify-between bg-[#f0f0f0] py-[6px]">
          <svg width="9" height="6" viewBox="0 0 9 6"><path d="M1 5l3.5-4L8 5" fill="none" stroke="#555" strokeWidth={1.5} /></svg>
          <div className="absolute top-[28px] h-[17px] w-[15px] bg-[#cdcdcd]" />
          <svg width="9" height="6" viewBox="0 0 9 6"><path d="M1 1l3.5 4L8 1" fill="none" stroke="#555" strokeWidth={1.5} /></svg>
        </div>
      </div>
      <div className="h-px bg-[#c5cbe0]" />
      <div className="relative flex h-[23px] items-center bg-white pb-[2px] pl-[8px] text-[14px]">
        <b>指令:</b>
        <span className="ml-[2px] h-[18px] w-px bg-black" />
        <div className="absolute right-[2px] top-[1px] flex flex-col gap-px">
          <span className="flex h-[10px] w-[14px] items-center justify-center border border-[#aaa] bg-[#f0f0f0]"><svg width="7" height="4" viewBox="0 0 7 4"><path d="M0 4h7L3.5 0z" fill="#222" /></svg></span>
          <span className="flex h-[10px] w-[14px] items-center justify-center border border-[#aaa] bg-[#f0f0f0]"><svg width="7" height="4" viewBox="0 0 7 4"><path d="M0 0h7L3.5 4z" fill="#222" /></svg></span>
        </div>
      </div>
      <div className="h-[3px]" />
      <div className="h-px bg-[#c5cbe0]" />

      {/* Toolbars */}
      <div className="flex h-[71px]">
        <div className="w-[1613px]">
          <div className="mt-[4px] flex h-[29px] border-b border-[#c5cbe0] text-[13px]">
            <div className="relative z-10 ml-[6px] h-[29px] w-[64px] bg-[#c5cbe0] pr-px pt-px [clip-path:polygon(5px_0,100%_0,100%_100%,0_100%,0_12px)]">
              <div className="flex h-full items-center justify-center bg-[#e9ebef] pb-[2px] [clip-path:polygon(5px_0,100%_0,100%_100%,0_100%,0_12px)]">标准</div>
            </div>
            {tabs.map((t) => (
              <div key={t.label} className={`relative ml-[-18px] h-[28px] bg-[#c5cbe0] pr-px pt-px [clip-path:polygon(18px_0,100%_0,100%_100%,0_100%)] ${t.w}`}>
                <div className="flex h-full items-center justify-center bg-[#d9d9d9] pb-[2px] pl-[17px] [clip-path:polygon(18px_0,100%_0,100%_100%,0_100%)]">{t.label}</div>
              </div>
            ))}
          </div>
          <div className="mt-px flex pl-[5px]">
            {topIcons.map((ic, i) => (
              <span key={i} className="flex h-[28px] w-[28px] items-center justify-center">
                <svg width="24" height="24" viewBox="0 0 24 24">{ic}</svg>
              </span>
            ))}
          </div>
        </div>
        <div className="relative flex-1">
          <Settings size={16} strokeWidth={1.3} className="absolute left-[-16px] top-[9px] text-[#777]" />
          <div className="absolute left-[2px] top-[4px] h-[62px] w-px bg-[#d5d8e2]" />
          <div className="absolute left-[10px] top-[4px] h-[62px] w-px bg-[#c5cbe0]" />
          <div className="ml-[16px] mt-[5px] flex gap-[6px]">
            {['M12 8a4 4 0 1 0 0 8a4 4 0 1 0 0-8z', 'M12 8l4 4-2.5 0v4h-3v-4H8z', 'M13.5 7.5c-4 2-5 5-2.5 9c1-2.500 4-4 2.500-9z'].map((d) => (
              <svg key={d} width="22" height="24" viewBox="0 0 24 24">
                <ellipse cx="12" cy="12" rx="11" ry="11.5" fill="url(#rkEye)" stroke="#cfd8ee" />
                <path d="M4 8c4-6 12-6 15-3M20 16c-4 6-12 6-15 3M3 14c0 3 2 5 4 6M21 10c0-3-2-5-4-6" fill="none" stroke="#e8f6ff" strokeWidth={1.3} />
                <circle cx="12" cy="12" r="6" fill="#fff" />
                <path d={d} fill="#333" />
              </svg>
            ))}
          </div>
        </div>
      </div>

      {/* Main */}
      <div className="flex h-[793px]">
        <div className="flex w-[1510px]">
          <div className="w-[65px] shrink-0">
            <div className="mx-[3px] mt-[3px] h-[3px] border-y border-[#d0d4e4]" />
            <div className="mt-px grid grid-cols-[29px_29px]">
              {leftIcons.map((ic, i) => (
                <span key={i} className="flex h-[28px] items-center justify-center">
                  <svg width="23" height="23" viewBox="0 0 24 24">{ic}</svg>
                </span>
              ))}
            </div>
          </div>
          <div className="flex-1">
            <div className="grid grid-cols-[720px_722px] grid-rows-[381px_375px] gap-[3px] bg-[#eef0f3]">
              <div className="relative bg-[#9aa1a9]"><TopDrawing /><ViewLabel name="Top" /></div>
              <div className="relative bg-[radial-gradient(ellipse_at_45%_45%,#c2c2c2_0%,#cdcdcc_55%,#dcdcd9_100%)]">
                <svg className="absolute left-[225px] top-[50px]" width="233" height="306" viewBox="0 0 233 306">
                  <rect x="0.5" y="0.5" width="232" height="305" rx="10" fill="#202020" stroke="#8a8a8a" />
                  <rect x="2" y="2" width="229" height="302" rx="9" fill="#333333" />
                  <rect x="9" y="9" width="215" height="288" rx="3" fill="#1c1c1c" />
                </svg>
                <ViewLabel name="Perspective" active />
              </div>
              <div className="relative bg-[#9aa1a9]"><FrontDrawing /><ViewLabel name="Front" /></div>
              <div className="relative bg-[#9aa1a9]"><RightDrawing /><ViewLabel name="Right" /></div>
            </div>
            <div className="mt-[2px] flex h-[24px] text-[13px]">
              <div className="z-10 h-[24px] w-[86px] bg-[#c5cbe0] pb-px pr-px [clip-path:polygon(0_0,100%_0,100%_100%,9px_100%,0_12px)]">
                <div className="flex h-full items-center justify-center bg-[#e9ebef] pl-[6px] [clip-path:polygon(0_0,100%_0,100%_100%,9px_100%,0_12px)]">Perspective</div>
              </div>
              {[{ t: 'Top', w: 'w-[40px]' }, { t: 'Front', w: 'w-[50px]' }, { t: 'Right', w: 'w-[50px]' }].map((b) => (
                <div key={b.t} className={`flex h-[23px] items-center justify-center bg-[#d9d9d9] pl-[4px] [clip-path:polygon(0_0,100%_0,100%_100%,9px_100%,0_12px)] ${b.w}`}>{b.t}</div>
              ))}
              <div className="flex h-[23px] w-[31px] items-center justify-center border-b border-r border-[#c5cbe0] pl-[2px] text-[#777]">
                <svg width="11" height="11" viewBox="0 0 11 11"><path d="M4 0h3v4h4v3H7v4H4V7H0V4h4z" fill="#e9ebef" stroke="#777" /></svg>
              </div>
            </div>
          </div>
        </div>

        {/* Layers panel */}
        <div className="relative ml-[7px] mt-[10px] flex h-[772px] w-[372px] flex-col border border-[#c5cbe0] bg-white">
          <div className="flex h-[26px] items-center border-b border-[#c5cbe0] bg-[#f5f6fa] pb-[2px]">
            {panelIcons.map((ic, i) => (
              <span key={i} className="flex w-[24.5px] justify-center">
                <svg width="18" height="18" viewBox="0 0 24 24">{ic}</svg>
              </span>
            ))}
          </div>
          <div className="flex h-[24px] w-[368px] items-center text-[12px] text-[#333]">
            <div className="h-full w-[180px] border-r border-[#e4e4e4] pl-[5px] leading-[24px]">名称</div>
            <div className="h-full w-[34px] border-r border-[#e4e4e4] pl-[7px] leading-[24px]">目...</div>
            <div className="h-full w-[17px] border-r border-[#e4e4e4]" />
            <div className="h-full w-[17px] border-r border-[#e4e4e4]" />
            <div className="h-full w-[16px] border-r border-[#e4e4e4]" />
            <div className="h-full w-[80px] border-r border-[#e4e4e4] pl-[6px] leading-[24px]">材质</div>
            <div className="h-full flex-1 overflow-hidden whitespace-nowrap pl-[6px] leading-[24px]">线型</div>
          </div>

          <div className="flex h-[21px] w-[368px] items-center border-b border-dotted border-[#ddd]">
            <div className="w-[180px] pl-[24px] text-[14px] font-bold">1</div>
            <div className="flex w-[34px] justify-center"><svg width="14" height="12" viewBox="0 0 14 12"><path d="M1 6l4 4 8-9" fill="none" stroke="#222" strokeWidth={1.4} /></svg></div>
            <div className="w-[34px]" />
            <div className="flex w-[16px] pl-[2px]"><span className="h-[12px] w-[12px] bg-black" /></div>
            <div className="flex w-[80px] pl-[3px]"><span className="h-[16px] w-[16px] rounded-full border border-[#e8e8e8] bg-[#fafafa]" /></div>
            <div className="flex-1 overflow-hidden pl-[5px] text-[13px] font-bold">Continuous</div>
          </div>
          {layers.map((l) => (
            <div key={l.name} className={`flex h-[21px] w-[368px] items-center border-b border-dotted ${l.selected ? 'border-white bg-[#0078d7] text-white' : 'border-[#ddd]'}`}>
              <div className={`relative h-full w-[180px] whitespace-nowrap leading-[20px] ${l.level === 0 ? 'pl-[23px]' : l.level === 1 ? 'pl-[39px]' : 'pl-[55px]'}`}>
                {l.chev && (
                  <span className={`absolute top-0 ${l.level === 0 ? 'left-[5px]' : 'left-[21px]'}`}><Chev dir={l.chev} /></span>
                )}
                {l.name}
              </div>
              <div className="w-[34px]" />
              <div className="flex w-[17px] justify-center"><Bulb white={l.selected} /></div>
              <div className="flex w-[17px] justify-center"><Lock white={l.selected} /></div>
              <div className="flex w-[16px] pl-[2px]">
                {l.color === '#000' && <span className="h-[12px] w-[12px] border border-black bg-[#000]" />}
                {l.color === '#3cbcbc' && <span className="h-[12px] w-[12px] border border-black bg-[#3cbcbc]" />}
                {l.color === '#5c5556' && <span className="h-[12px] w-[12px] border border-black bg-[#5c5556]" />}
                {l.color === '#7f9a9b' && <span className="h-[12px] w-[12px] border border-white bg-[#7f9a9b]" />}
                {l.color === '#ff0000' && <span className="h-[12px] w-[12px] border border-black bg-[#ff0000]" />}
                {l.color === '#12a39f' && <span className="h-[12px] w-[12px] border border-black bg-[#12a39f]" />}
              </div>
              <div className="flex w-[80px] pl-[3px]">
                <span className={`h-[16px] w-[16px] rounded-full border ${l.selected ? 'border-white bg-white' : 'border-[#e8e8e8] bg-[#fafafa]'}`} />
              </div>
              <div className="flex-1 overflow-hidden whitespace-nowrap pl-[5px] text-[13px]">Continuous</div>
            </div>
          ))}

          <div className="mt-auto flex h-[15px] items-center bg-[#f0f0f0]">
            <svg width="16" height="15" viewBox="0 0 16 15"><path d="M10 4l-4 3.5 4 3.5" fill="none" stroke="#555" strokeWidth={1.5} /></svg>
            <div className="ml-[1px] h-[15px] w-[235px] bg-[#cdcdcd]" />
          </div>
        </div>

        {/* Side tabs */}
        <div className="mt-[10px] flex w-[31px] flex-col">
          {sideTabs.map((s) => (
            <div key={s.label} className={`relative w-[30px] ${s.h}`}>
              <div className="absolute inset-0 bg-[#c5cbe0] [clip-path:polygon(0_0,26px_0,30px_5px,30px_calc(100%-24px),0_100%)]" />
              <div className={`absolute inset-y-0 left-0 right-px top-px [clip-path:polygon(0_0,25px_0,29px_5px,29px_calc(100%-24px),0_100%)] ${s.active ? 'bg-[#eef0f4]' : 'bg-[#d9d9d9]'}`} />
              <div className="relative flex flex-col items-center pr-[3px] pt-[3px] text-[13px] leading-[13.5px] text-[#222]">
                <svg width="18" height="18" viewBox="0 0 18 18" className="mb-[-1px]">{s.icon}</svg>
                {s.label.split('').map((c, i) => <span key={i}>{c}</span>)}
              </div>
            </div>
          ))}
        </div>

        {/* Watermark */}
        <div className="absolute left-[1788px] top-[965px] flex h-[41px] w-[98px] rounded-[4px] bg-[#ececec]/90 pl-[7px] pt-[5px] shadow-[0_1px_2px_#ccc]">
          <div className="w-[66px]">
            <div className="text-[19px] font-bold leading-[22px] tracking-[1px] text-black">学犀牛</div>
            <div className="text-[9px] leading-[10px] tracking-[0.6px] text-[#222]">xuexiniu.com</div>
          </div>
          <div className="flex h-[30px] w-[19px] flex-col items-center justify-center bg-[#cc3344] text-[9px] leading-[10px] text-white">
            <span>中</span><span>文</span><span>网</span>
          </div>
        </div>
        <Settings size={15} fill="#bbb" stroke="#bbb" className="absolute left-[1905px] top-[976px]" />
      </div>

      {/* Snaps */}
      <div className="flex h-[20px] items-center gap-[7px] border-b border-[#c5cbe0] pl-[9px] text-[13px]">
        {snaps.map((s) => (
          <label key={s.t} className="flex items-center gap-[3px]"><CheckBox on={s.on} />{s.t}</label>
        ))}
        <label className="flex items-center gap-[3px] text-[#444]"><CheckBox off />投影</label>
        <label className="ml-[13px] flex items-center gap-[3px] text-[#444]"><CheckBox off />停用</label>
      </div>

      {/* Status bar */}
      <div className="flex h-[20px] items-center text-[12px]">
        {status.map((s) => (
          <div key={s.t} className={`h-full border-r border-[#c5cbe0] text-center leading-[19px] ${s.w}`}>{s.t}</div>
        ))}
        <div className="flex h-full w-[167px] items-center border-r border-[#c5cbe0] pl-[3px] text-[13px]">
          <span className="mr-[2px] h-[15px] w-[13px] bg-black" />1
        </div>
        {status2.map((s) => (
          <div key={s.t} className={`h-full border-r border-[#c5cbe0] text-center leading-[19px] ${s.w} ${s.on ? 'bg-[#e1effa] font-bold' : ''}`}>{s.t}</div>
        ))}
        <div className="pl-[2px]">距离上次保存的时间 (分钟): 92</div>
      </div>
    </div>
  );
}
